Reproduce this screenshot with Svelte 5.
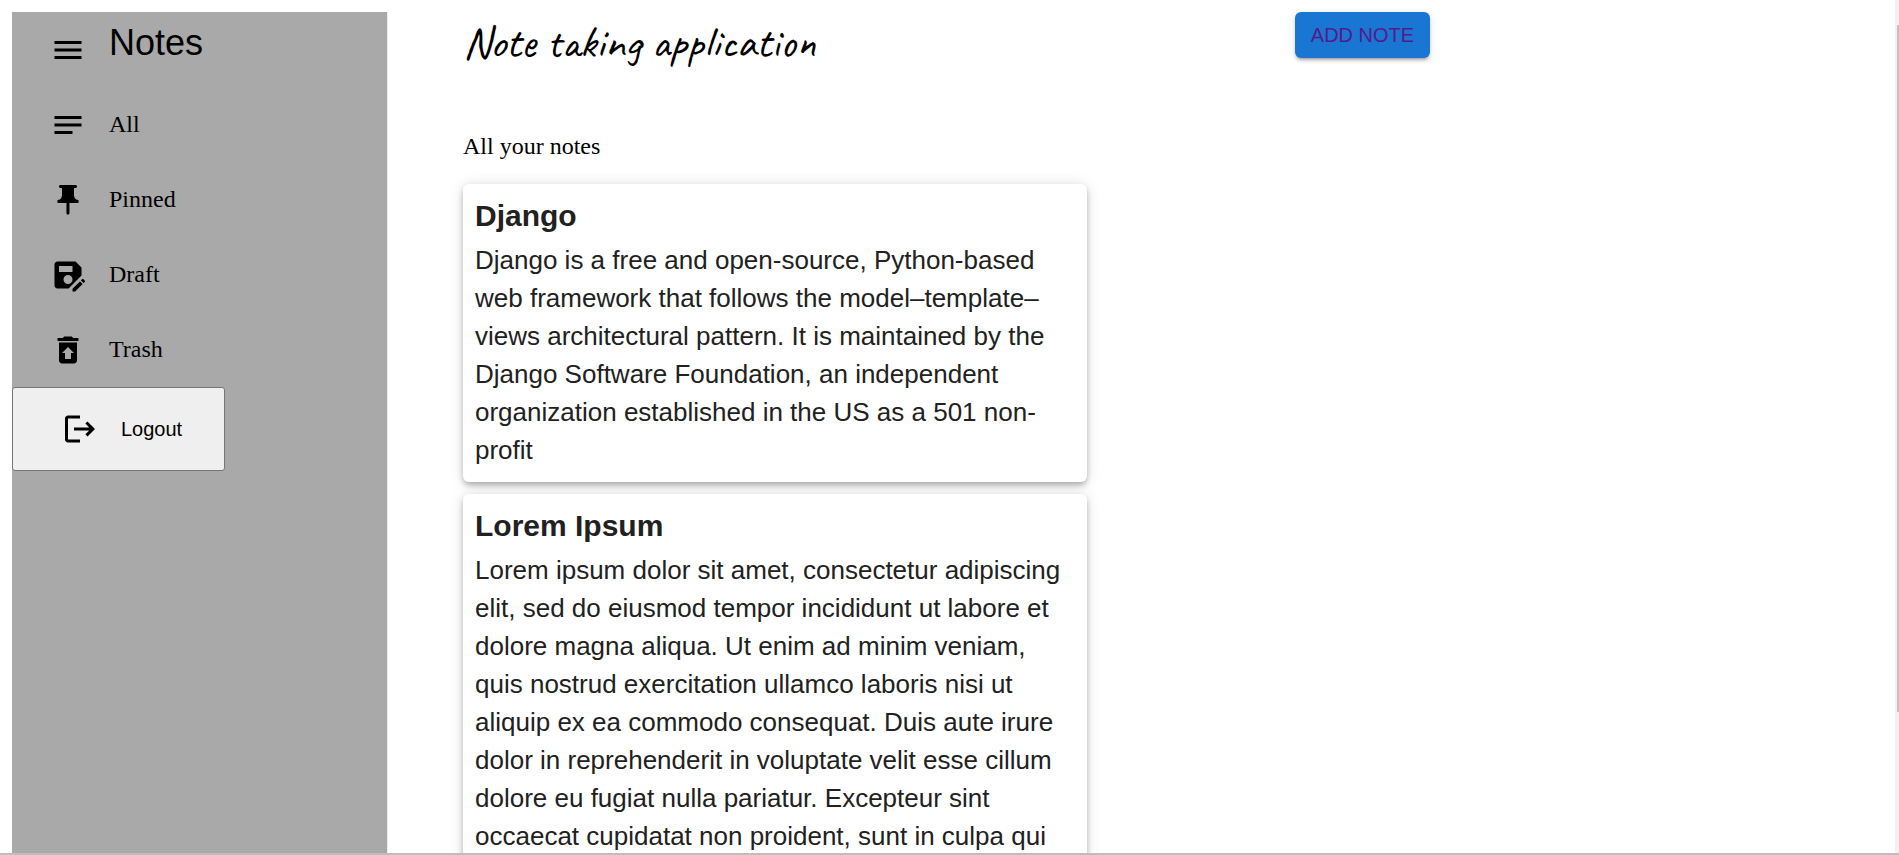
<script>
  const links = [
    {
      label: 'All',
      path: 'M21 11.01 3 11v2h18zM3 16h12v2H3zM21 6H3v2.01L21 8z'
    },
    {
      label: 'Pinned',
      path: 'M16 9V4h1c.55 0 1-.45 1-1s-.45-1-1-1H7c-.55 0-1 .45-1 1s.45 1 1 1h1v5c0 1.66-1.34 3-3 3v2h5.97v7l1 1 1-1v-7H19v-2c-1.66 0-3-1.34-3-3z'
    },
    {
      label: 'Draft',
      path: 'M21 12.4V7l-4-4H5c-1.11 0-2 .9-2 2v14c0 1.1.89 2 2 2h7.4l8.6-8.6zM15 15c0 1.66-1.34 3-3 3s-3-1.34-3-3 1.34-3 3-3 3 1.34 3 3zM6 6h9v4H6V6zm13.99 10.25 1.77 1.77L16.77 23H15v-1.77l4.99-4.98zm3.26.26-.85.85-1.77-1.77.85-.85c.2-.2.51-.2.71 0l1.06 1.06c.2.2.2.52 0 .71z'
    },
    {
      label: 'Trash',
      path: 'M19 4h-3.5l-1-1h-5l-1 1H5v2h14zM6 7v12c0 1.1.9 2 2 2h8c1.1 0 2-.9 2-2V7zm8 7v4h-4v-4H8l4-4 4 4z'
    }
  ];

  const notes = [
    {
      title: 'Django',
      body: 'Django is a free and open-source, Python-based web framework that follows the model–template–views architectural pattern. It is maintained by the Django Software Foundation, an independent organization established in the US as a 501 non-profit'
    },
    {
      title: 'Lorem Ipsum',
      body: 'Lorem ipsum dolor sit amet, consectetur adipiscing elit, sed do eiusmod tempor incididunt ut labore et dolore magna aliqua. Ut enim ad minim veniam, quis nostrud exercitation ullamco laboris nisi ut aliquip ex ea commodo consequat. Duis aute irure dolor in reprehenderit in voluptate velit esse cillum dolore eu fugiat nulla pariatur. Excepteur sint occaecat cupidatat non proident, sunt in culpa qui'
    }
  ];
</script>

{#snippet icon(path)}
  <svg class="icon" viewBox="0 0 24 24" aria-hidden="true"><path fill-rule="evenodd" d={path} /></svg>
{/snippet}

<div class="shell">
  <div class="page">
    <nav class="sidebar">
      <div class="brand">
        {@render icon('M3 18h18v-2H3v2zm0-5h18v-2H3v2zm0-7v2h18V6H3z')}
        <span class="brand-name">Notes</span>
      </div>
      {#each links as link}
        <a class="link" href="#{link.label.toLowerCase()}">
          {@render icon(link.path)}
          <span class="link-label">{link.label}</span>
        </a>
      {/each}
      <button class="logout" type="button">
        {@render icon('M17 7l-1.41 1.41L18.17 11H8v2h10.17l-2.58 2.58L17 17l5-5zM4 5h8V3H4c-1.1 0-2 .9-2 2v14c0 1.1.9 2 2 2h8v-2H4V5z')}
        <span>Logout</span>
      </button>
    </nav>

    <main class="main">
      <header class="header">
        <h1 class="title">Note taking application</h1>
        <button class="add" type="button">ADD NOTE</button>
      </header>
      <p class="caption">All your notes</p>
      <div class="notes">
        {#each notes as note}
          <article class="card">
            <h2 class="card-title">{note.title}</h2>
            <p class="card-body">{note.body}</p>
          </article>
        {/each}
      </div>
    </main>
  </div>
  <div class="track"><div class="thumb"></div></div>
</div>

<style>
  .shell {
    box-sizing: border-box;
    display: flex;
    height: 100vh;
    overflow: hidden;
    border-bottom: 2px solid #bdbdbd;
    background: #fff;
    color: #000;
    font-family: "Liberation Sans", Arial, sans-serif;
  }

  .page {
    display: flex;
    flex: 1;
    min-width: 0;
    padding: 12px 0 0 12px;
    overflow: hidden;
  }

  .sidebar {
    flex: none;
    width: 375px;
    background: #a9a9a9;
    border-right: 1px solid #ececec;
  }

  .icon {
    flex: none;
    display: block;
    width: 36px;
    height: 36px;
    fill: currentColor;
  }

  .brand,
  .link {
    box-sizing: border-box;
    display: flex;
    align-items: center;
    gap: 23px;
    height: 75px;
    padding-left: 38px;
  }

  .brand-name {
    align-self: flex-start;
    font-size: 36px;
    line-height: 62px;
  }

  .link {
    color: #000;
    font-family: "Liberation Serif", "Times New Roman", serif;
    font-size: 24px;
    line-height: 28px;
    text-decoration: none;
  }

  .link-label {
    padding-bottom: 2px;
  }

  .logout {
    display: flex;
    align-items: center;
    gap: 23px;
    height: 84px;
    padding: 0 42px 0 49px;
    border: 1px solid #767676;
    border-radius: 3px;
    background: #efefef;
    color: #000;
    font-family: inherit;
    font-size: 20px;
    line-height: 24px;
  }

  .main {
    flex: 1;
    min-width: 0;
    padding: 0 6px 0 75px;
  }

  .header {
    display: grid;
    grid-template-columns: 7fr 5fr;
    align-items: start;
    justify-items: start;
  }

  .title {
    margin: 0;
    font-family: Caveat, cursive;
    font-size: 45px;
    font-weight: 400;
    line-height: 62px;
    white-space: nowrap;
  }

  .add {
    height: 46px;
    padding: 0 16px;
    border: 0;
    border-radius: 6px;
    background: #1976d2;
    box-shadow:
      0 4px 2px -3px rgba(0, 0, 0, 0.2),
      0 3px 3px 0 rgba(0, 0, 0, 0.14),
      0 1px 7px 0 rgba(0, 0, 0, 0.12);
    color: #551a8b;
    font-family: inherit;
    font-size: 20px;
    line-height: 24px;
    white-space: nowrap;
  }

  .caption {
    margin: 58px 0 24px;
    font-family: "Liberation Serif", "Times New Roman", serif;
    font-size: 24px;
    line-height: 28px;
  }

  .notes {
    display: flex;
    flex-direction: column;
    gap: 12px;
    width: 43.75%;
  }

  .card {
    padding: 12px 12px 13px;
    border-radius: 6px;
    background: #fff;
    box-shadow:
      0 4px 6px -2px rgba(0, 0, 0, 0.2),
      0 3px 6px 0 rgba(0, 0, 0, 0.14),
      0 1px 15px 0 rgba(0, 0, 0, 0.12);
    color: #212121;
  }

  .card-title {
    margin: 0 0 5px;
    font-size: 30px;
    font-weight: 700;
    line-height: 40px;
  }

  .card-body {
    margin: 0;
    font-size: 26px;
    line-height: 38px;
  }

  .track {
    flex: none;
    width: 4px;
    background: #f1f1f1;
  }

  .thumb {
    width: 2px;
    height: calc(100% - 166px);
    margin: 25px 0 0 2px;
    background: #c1c1c1;
  }
</style>
